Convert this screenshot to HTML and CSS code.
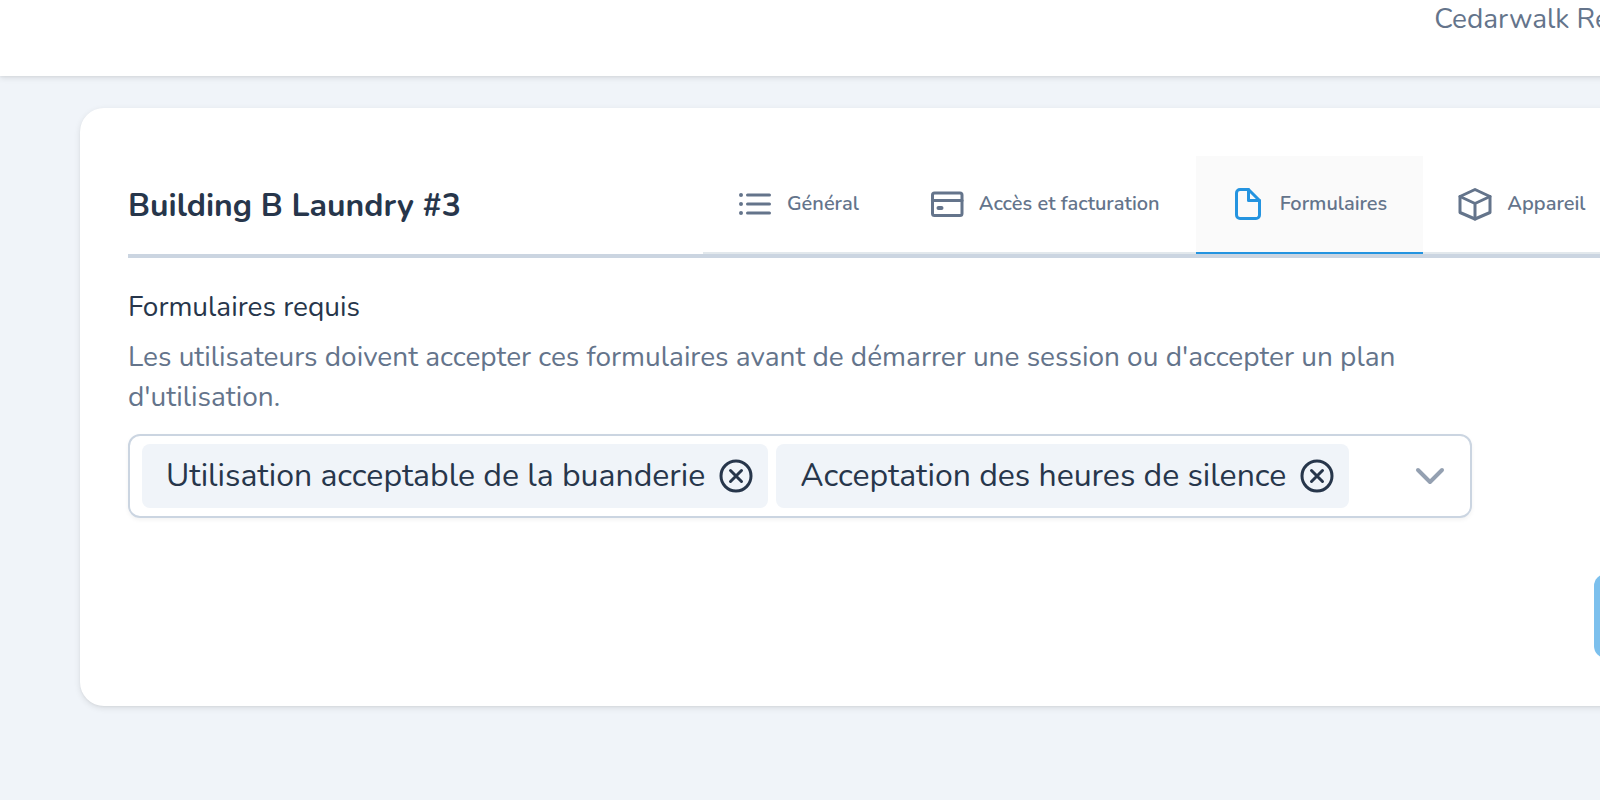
FILE: index.html
```
<!DOCTYPE html>
<html lang="fr">
<head>
    <meta charset="UTF-8">
    <meta name="viewport" content="width=device-width, initial-scale=1.0">
    <title>Building B Laundry #3</title>
    <link rel="stylesheet" href="styles.css">
</head>
<body>
    <div class="page">
        <header class="topbar">
            <span>Cedarwalk Residences</span>
        </header>

        <main class="card">
            <div class="card-header">
                <h1>Building B Laundry #3</h1>
                <nav class="tabs">
                    <a href="#general" class="tab">
                        <svg class="icon" viewBox="0 0 32 32">
                            <path d="M8.500 7h22M8.500 16h22M8.500 25h22"/>
                            <path class="dots" d="M2 7h0M2 16h0M2 25h0"/>
                        </svg>
                        <span>Général</span>
                    </a>
                    <a href="#acces" class="tab">
                        <svg class="icon" viewBox="0 0 32 32">
                            <rect x="1.500" y="5" width="29.500" height="22.500" rx="2"/>
                            <path d="M1.500 12.500h29.500"/>
                            <path class="thick" d="M7.500 20h3"/>
                        </svg>
                        <span>Accès et facturation</span>
                    </a>
                    <a href="#formulaires" class="tab active" aria-current="page">
                        <svg class="icon" viewBox="0 0 32 32">
                            <path d="M8 1.500h8.500l11 11v14.500a3.500 3.500 0 0 1-3.500 3.500H8a3.500 3.500 0 0 1-3.500-3.500V5A3.500 3.500 0 0 1 8 1.500z"/>
                            <path d="M16.500 1.500v11h11"/>
                        </svg>
                        <span>Formulaires</span>
                    </a>
                    <a href="#appareil" class="tab">
                        <svg class="icon" viewBox="0 0 32 32">
                            <path d="M16 1.500l15 7v16l-15 6.500-15-6.500v-16z"/>
                            <path d="M1 8.500l15 7 15-7M16 15.500V31"/>
                        </svg>
                        <span>Appareil</span>
                    </a>
                </nav>
            </div>

            <form class="form">
                <label for="forms">Formulaires requis</label>
                <p class="hint">Les utilisateurs doivent accepter ces formulaires avant de démarrer une session ou d'accepter un plan d'utilisation.</p>
                <div class="multiselect">
                    <span class="chip">
                        Utilisation acceptable de la buanderie
                        <button type="button" class="remove" aria-label="Retirer">
                            <svg class="icon" viewBox="0 0 32 32">
                                <circle cx="16" cy="16" r="15"/>
                                <path d="M10.500 10.500l11 11M21.500 10.500l-11 11"/>
                            </svg>
                        </button>
                    </span>
                    <span class="chip">
                        Acceptation des heures de silence
                        <button type="button" class="remove" aria-label="Retirer">
                            <svg class="icon" viewBox="0 0 32 32">
                                <circle cx="16" cy="16" r="15"/>
                                <path d="M10.500 10.500l11 11M21.500 10.500l-11 11"/>
                            </svg>
                        </button>
                    </span>
                    <input type="text" id="forms" autocomplete="off">
                    <button type="button" class="toggle" aria-label="Ouvrir la liste">
                        <svg class="icon" viewBox="0 0 32 32">
                            <path d="M4 10l12 12 12-12"/>
                        </svg>
                    </button>
                </div>
                <div class="actions">
                    <button type="submit" class="save" aria-label="Enregistrer" disabled></button>
                </div>
            </form>
        </main>
    </div>
</body>
</html>
```
FILE: styles.css
```
* {
    margin: 0;
    padding: 0;
    box-sizing: border-box;
}

body {
    background: #f0f4f9;
    color: #27364b;
    font-family: Nunito, "Open Sans", sans-serif;
    font-size: 28px;
    line-height: 40px;
    min-height: 100vh;
    overflow-x: hidden;
}

/* The content is wider than the window and runs off its right edge */
.page {
    margin-right: -204px;
}

.topbar {
    display: flex;
    justify-content: flex-end;
    padding: 0 86px 38px;
    background: #fff;
    color: #64748b;
    line-height: 38px;
    box-shadow: 0 2px 6px rgba(0, 0, 0, 0.1), 0 1px 2px rgba(0, 0, 0, 0.04);
}

.card {
    margin: 32px 0 32px 80px;
    padding: 48px;
    background: #fff;
    border-radius: 24px;
    box-shadow: 0 2px 6px rgba(0, 0, 0, 0.1), 0 1px 2px rgba(0, 0, 0, 0.04);
}

.card-header {
    display: grid;
    grid-template-columns: 575px 1fr;
    align-items: center;
    border-bottom: 4px solid #cbd5e1;
}

h1 {
    padding-top: 2px;
    font-size: 32px;
    font-weight: 700;
    line-height: 44px;
}

.tabs {
    display: flex;
    border-bottom: 2px solid #e2e8ec;
}

.tab {
    display: flex;
    align-items: center;
    gap: 16px;
    height: 98px;
    margin-bottom: -2px;
    padding: 0 36px;
    border-bottom: 2px solid transparent;
    color: #64748b;
    font-size: 20px;
    font-weight: 600;
    line-height: 28px;
    text-decoration: none;
}

.tab.active {
    background: #fafafa;
    border-color: #2494e0;
}

.tab.active .icon {
    color: #2494e0;
}

.icon {
    display: block;
    flex: none;
    width: 32px;
    height: 32px;
    fill: none;
    stroke: currentColor;
    stroke-width: 3;
    stroke-linecap: round;
    stroke-linejoin: round;
    overflow: visible;
}

.icon .dots {
    stroke-width: 4;
}

.icon .thick {
    stroke-width: 4;
}

.form {
    padding-top: 28px;
}

.form label {
    display: block;
    line-height: 42px;
}

.hint {
    max-width: 1344px;
    margin-top: 9px;
    color: #64748b;
}

.multiselect {
    display: flex;
    align-items: center;
    gap: 8px;
    max-width: 1344px;
    margin-top: 17px;
    padding: 8px 24px 8px 12px;
    border: 2px solid #cbd5e1;
    border-radius: 12px;
    box-shadow: 0 2px 4px rgba(0, 0, 0, 0.05);
}

.multiselect input {
    flex: 1;
    min-width: 0;
    height: 64px;
    border: 0;
    outline: 0;
    background: transparent;
    color: inherit;
    font: inherit;
}

.chip {
    display: flex;
    align-items: center;
    gap: 15px;
    height: 64px;
    padding: 0 16px 0 24px;
    border-radius: 8px;
    background: #f0f4f9;
    font-size: 32px;
    white-space: nowrap;
}

button {
    border: 0;
    background: none;
    color: inherit;
    font: inherit;
    cursor: pointer;
}

.toggle {
    color: #94a0b1;
}

.toggle .icon {
    stroke-width: 4;
}

.actions {
    display: flex;
    justify-content: flex-end;
    margin-top: 56px;
}

.save {
    width: 162px;
    height: 84px;
    border-radius: 12px;
    background: #7cc0ed;
}
```
